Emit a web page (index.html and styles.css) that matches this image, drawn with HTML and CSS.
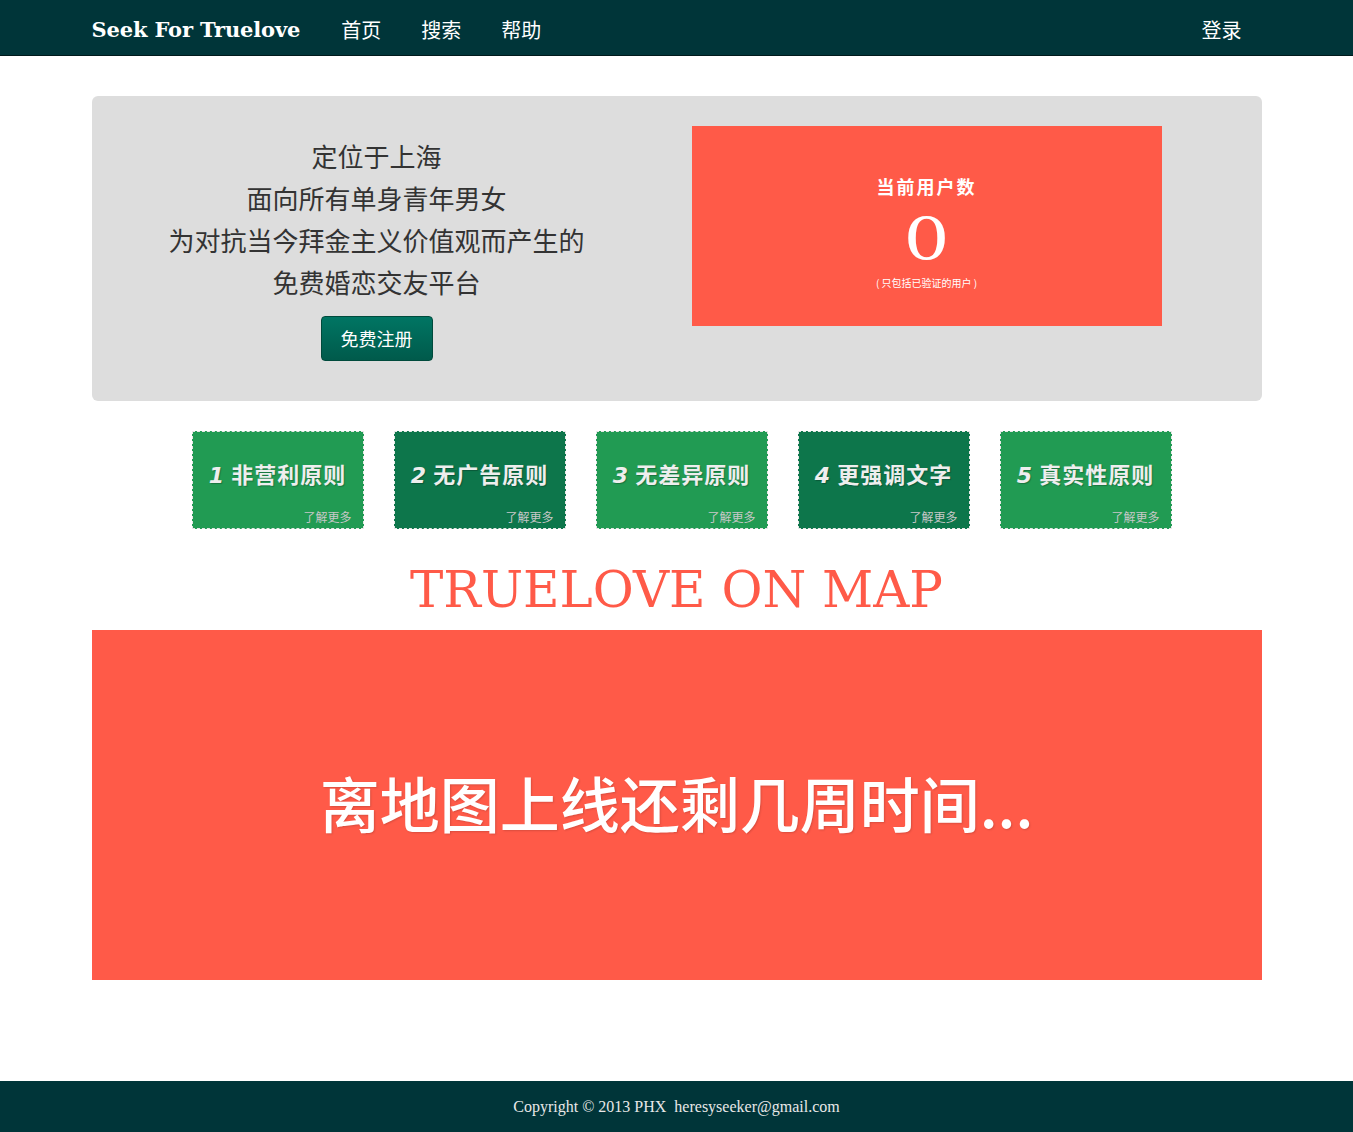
FILE: index.html
```html
<!DOCTYPE html>
<html lang="zh">
<head>
<meta charset="utf-8">
<title>Seek For Truelove</title>
<link rel="stylesheet" href="styles.css">
</head>
<body>
<header class="navbar">
  <div class="container nav-inner">
    <a class="brand" href="#">Seek For Truelove</a>
    <nav class="nav-links">
      <a href="#">首页</a>
      <a href="#">搜索</a>
      <a href="#">帮助</a>
    </nav>
    <a class="login" href="#">登录</a>
  </div>
</header>

<main class="container">
  <section class="hero">
    <div class="hero-text">
      <p>定位于上海</p>
      <p>面向所有单身青年男女</p>
      <p>为对抗当今拜金主义价值观而产生的</p>
      <p>免费婚恋交友平台</p>
      <a class="btn-register" href="#">免费注册</a>
    </div>
    <div class="stat">
      <div class="stat-title">当前用户数</div>
      <div class="stat-num"><span>0</span></div>
      <div class="stat-note">( 只包括已验证的用户 )</div>
    </div>
  </section>

  <section class="rules">
    <a class="rule light" href="#"><span class="rule-title"><i>1</i> 非营利原则</span><span class="more">了解更多</span></a>
    <a class="rule dark" href="#"><span class="rule-title"><i>2</i> 无广告原则</span><span class="more">了解更多</span></a>
    <a class="rule light" href="#"><span class="rule-title"><i>3</i> 无差异原则</span><span class="more">了解更多</span></a>
    <a class="rule dark" href="#"><span class="rule-title"><i>4</i> 更强调文字</span><span class="more">了解更多</span></a>
    <a class="rule light" href="#"><span class="rule-title"><i>5</i> 真实性原则</span><span class="more">了解更多</span></a>
  </section>

  <h2 class="map-title">TRUELOVE ON MAP</h2>
  <section class="map">
    <p>离地图上线还剩几周时间...</p>
  </section>
</main>

<footer class="footer">
  Copyright &copy; 2013 PHX&nbsp; heresyseeker@gmail.com
</footer>
</body>
</html>
```

FILE: styles.css
```css
* { box-sizing: border-box; }
html, body { margin: 0; padding: 0; }
body {
  font-family: "Noto Sans CJK SC", "Noto Sans", sans-serif;
  color: #333;
  background: #fff;
}
a { text-decoration: none; }
.container {
  width: 1170px;
  margin: 0 auto;
}
.navbar {
  background: #003539;
  height: 56px;
  border-bottom: 1px solid #001a1c;
}
.nav-inner {
  display: flex;
  align-items: center;
  height: 55px;
  padding-top: 4px;
}
.brand {
  font-family: "DejaVu Serif", "Liberation Serif", serif;
  font-weight: bold;
  font-size: 21px;
  color: #fff;
  letter-spacing: -0.15px;
  margin-right: 21px;
}
.nav-links { display: flex; }
.nav-links a, .login {
  color: #fff;
  font-size: 20px;
  padding: 0 20px;
  line-height: 51px;
}
.login { margin-left: auto; padding-right: 20px; }

.hero {
  margin-top: 40px;
  background: #dddddd;
  border-radius: 6px;
  padding: 30px 100px 40px 30px;
  display: grid;
  grid-template-columns: 510px 470px;
  column-gap: 60px;
  height: 305px;
}
.hero-text {
  text-align: center;
  padding-top: 9px;
}
.hero-text p {
  margin: 0;
  font-size: 26px;
  line-height: 42px;
  color: #333;
}
.btn-register {
  display: inline-block;
  margin-top: 13px;
  width: 112px;
  height: 45px;
  line-height: 43px;
  font-size: 18px;
  color: #fff;
  border-radius: 4px;
  background: linear-gradient(#007563, #005a4b);
  border: 1px solid #004a3c;
}
.stat {
  background: #ff5a48;
  height: 200px;
  color: #fff;
  text-align: center;
  padding-top: 48px;
}
.stat-title {
  font-size: 18px;
  font-weight: bold;
  letter-spacing: 2px;
  line-height: 24px;
}
.stat-num {
  font-family: "DejaVu Serif", "Liberation Serif", serif;
  font-size: 58px;
  line-height: 66px;
  margin-top: 8px;
}
.stat-num span {
  display: inline-block;
  transform: scaleX(1.25);
}
.stat-note {
  font-size: 10px;
  line-height: 14px;
  margin-top: 4px;
}

.rules {
  display: flex;
  gap: 30px;
  padding-left: 100px;
  margin-top: 30px;
}
.rule {
  position: relative;
  width: 172px;
  height: 98px;
  border: 1px dashed #e8e8e8;
  display: block;
}
.rule.light { background: #219b53; }
.rule.dark { background: #0d764b; }
.rule-title {
  display: block;
  text-align: center;
  margin-top: 25px;
  font-size: 22px;
  font-weight: bold;
  color: #eeeeee;
  text-shadow: 1px 1px 1px rgba(0,0,0,0.25);
  letter-spacing: 1px;
}
.rule-title i {
  font-style: italic;
  font-family: "DejaVu Sans", sans-serif;
}
.more {
  position: absolute;
  right: 11px;
  bottom: 3px;
  font-size: 12px;
  color: #c8c8c8;
}

.map-title {
  font-family: "DejaVu Serif", "Liberation Serif", serif;
  font-weight: normal;
  color: #ff5a48;
  text-align: center;
  font-size: 50px;
  line-height: 60px;
  margin: 31px 0 10px;
}
.map {
  background: #ff5a48;
  height: 350px;
  display: flex;
  align-items: center;
  justify-content: center;
}
.map p {
  margin: 0;
  color: #fff;
  font-size: 60px;
  font-weight: 500;
  padding-bottom: 8px;
  text-shadow: 1px 1px 2px rgba(0,0,0,0.15);
}

.footer {
  margin-top: 101px;
  background: #003539;
  height: 51px;
  line-height: 51px;
  text-align: center;
  color: #e8e8e8;
  font-family: "Liberation Serif", "DejaVu Serif", serif;
  font-size: 16px;
}
```
